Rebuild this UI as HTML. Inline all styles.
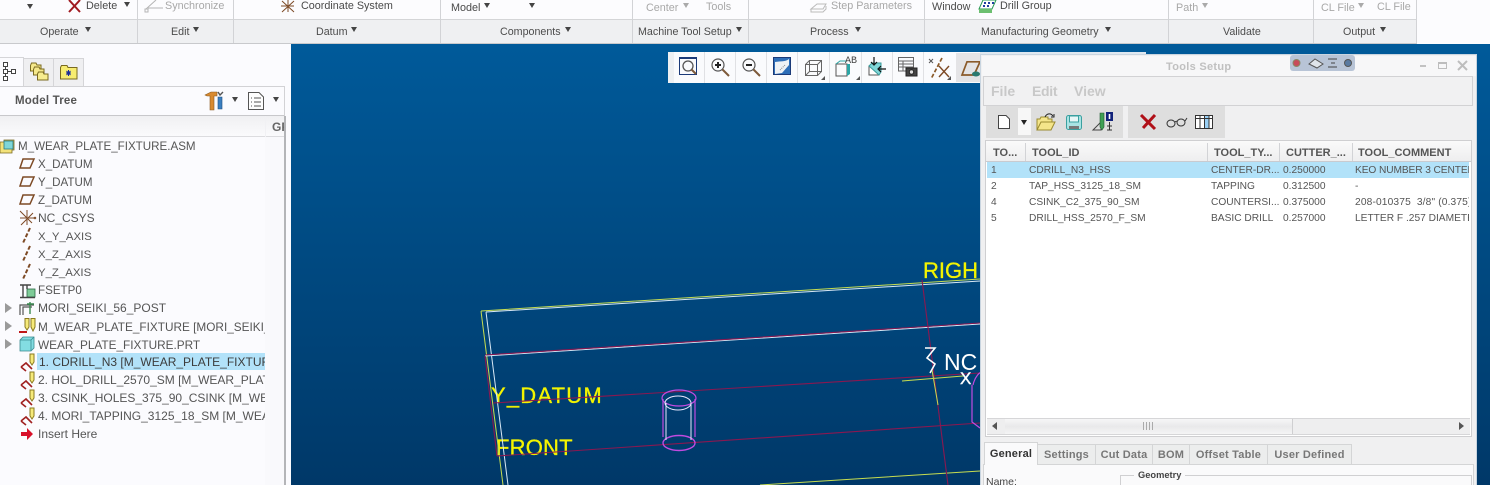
<!DOCTYPE html>
<html><head><meta charset="utf-8">
<style>
html,body{margin:0;padding:0;width:1490px;height:485px;overflow:hidden;background:#fff}
body{font-family:"Liberation Sans",sans-serif;position:relative}
.a{position:absolute}
.t{position:absolute;white-space:nowrap;font-size:10.8px;line-height:14px;color:#4a4a4a;margin-top:1px}
.g{color:#a8a8a8}
.l{position:absolute;top:25px;font-size:10.7px;line-height:14px;color:#4c4c4c;white-space:nowrap}
.s{position:absolute;width:1px;background:#d2d3d6}
.ts{position:absolute;width:1px;background:#e0e1e4}
.tri{position:absolute;width:0;height:0;border-left:3.5px solid transparent;border-right:3.5px solid transparent;border-top:5px solid #444}
.tr{position:absolute;left:38px;white-space:nowrap;font-size:12px;line-height:14px;color:#555}
.n{font-size:11.6px;margin-top:1px}
svg{position:absolute;overflow:visible}
.arr{position:absolute;left:5px;width:0;height:0;border-top:5px solid transparent;border-bottom:5px solid transparent;border-left:7px solid #9a9a9a}
.h{position:absolute;top:147px;font-size:11px;font-weight:bold;color:#555;line-height:13px;white-space:nowrap}
.c{position:absolute;font-size:10.2px;line-height:13px;color:#555;white-space:nowrap;overflow:hidden;margin-top:1px}
.tb{position:absolute;top:444px;height:20px;background:#eceded;border:1px solid #d4d5d6;border-bottom:none;box-sizing:border-box;font-size:11px;font-weight:bold;color:#777;line-height:20px;text-align:center;letter-spacing:.2px}
.v{position:absolute;color:#f4f400;white-space:nowrap;font-size:22px;line-height:25px;-webkit-text-stroke:.3px #f4f400}
</style></head><body>

<!-- ribbon -->
<div class="a" style="left:0;top:0;width:1490px;height:44px;background:#fcfcfe"></div>
<div class="a" style="left:0;top:19px;width:1417px;height:25px;background:#eff0f2;border-top:1px solid #d4d5d7;border-bottom:1px solid #c8c9cc;box-sizing:border-box"></div>
<div class="s" style="left:137px;top:0;height:43px"></div>
<div class="s" style="left:233px;top:0;height:43px"></div>
<div class="s" style="left:440px;top:0;height:43px"></div>
<div class="s" style="left:632px;top:0;height:43px"></div>
<div class="s" style="left:748px;top:0;height:43px"></div>
<div class="s" style="left:924px;top:0;height:43px"></div>
<div class="s" style="left:1168px;top:0;height:43px"></div>
<div class="s" style="left:1313px;top:0;height:43px"></div>
<div class="s" style="left:1416px;top:0;height:43px"></div>

<div class="tri" style="left:27px;top:4px"></div>
<svg style="left:68px;top:0" width="14" height="13"><path d="M1 0L12 12M12 0L1 12" stroke="#a01a20" stroke-width="2" fill="none"/></svg>
<div class="t" style="left:86px;top:-2px">Delete</div>
<div class="tri" style="left:124px;top:2px"></div>
<svg style="left:145px;top:0" width="18" height="13" fill="none" stroke="#b5b5b5"><path d="M1 9L11 0M3 8H18"/><rect x="0" y="9" width="3" height="3"/></svg>
<div class="t g" style="left:165px;top:-2px">Synchronize</div>
<svg style="left:281px;top:0" width="17" height="13" fill="none" stroke="#7d4a25"><path d="M1 1L13 12M1 12L13 1M7 0V12M0 6H13"/></svg>
<div class="t" style="left:301px;top:-2px">Coordinate System</div>
<div class="t" style="left:451px;top:0">Model</div>
<div class="tri" style="left:484px;top:3px"></div>
<div class="tri" style="left:529px;top:3px"></div>
<div class="t g" style="left:646px;top:0">Center</div>
<div class="tri" style="left:683px;top:3px;border-top-color:#aaa"></div>
<div class="t g" style="left:706px;top:-1px">Tools</div>
<svg style="left:810px;top:1px" width="18" height="12" fill="none" stroke="#bbb"><path d="M1 8L7 3H16L13 8H1ZM1 8V11H13L16 8V5"/></svg>
<div class="t g" style="left:831px;top:-2px">Step Parameters</div>
<div class="t" style="left:932px;top:-1px">Window</div>
<svg style="left:979px;top:0" width="17" height="13"><path d="M4 0H17L13 9H0Z" fill="#fff" stroke="#2a9a55"/><path d="M5 2h2v2H5zM9 2h2v2H9zM13 2h2v2h-2zM4 5h2v2H4zM8 5h2v2H8z" fill="#2040a0"/><path d="M0 9H13V13H0Z" fill="#6cbf70"/></svg>
<div class="t" style="left:1000px;top:-2px">Drill Group</div>
<div class="t g" style="left:1176px;top:0">Path</div>
<div class="tri" style="left:1202px;top:3px;border-top-color:#aaa"></div>
<div class="t g" style="left:1321px;top:0">CL File</div>
<div class="tri" style="left:1358px;top:3px;border-top-color:#aaa"></div>
<div class="t g" style="left:1377px;top:-1px">CL File</div>

<div class="l" style="left:40px">Operate</div><div class="tri" style="left:85px;top:27px"></div>
<div class="l" style="left:171px">Edit</div><div class="tri" style="left:193px;top:27px"></div>
<div class="l" style="left:316px">Datum</div><div class="tri" style="left:351px;top:27px"></div>
<div class="l" style="left:500px">Components</div><div class="tri" style="left:565px;top:27px"></div>
<div class="l" style="left:638px">Machine Tool Setup</div><div class="tri" style="left:736px;top:27px"></div>
<div class="l" style="left:810px">Process</div><div class="tri" style="left:855px;top:27px"></div>
<div class="l" style="left:981px">Manufacturing Geometry</div><div class="tri" style="left:1105px;top:27px"></div>
<div class="l" style="left:1223px">Validate</div>
<div class="l" style="left:1343px">Output</div><div class="tri" style="left:1380px;top:27px"></div>

<!-- left panel -->
<div class="a" style="left:0;top:44px;width:291px;height:441px;background:#fbfbfe"></div>
<div class="a" style="left:0;top:57px;width:24px;height:30px;background:#fbfbfe;border-right:1px solid #d5d5d8;border-top:1px solid #d5d5d8;box-sizing:border-box"></div>
<div class="a" style="left:24px;top:58px;width:30px;height:29px;background:#efeff1;border-top:1px solid #d5d5d8;border-right:1px solid #d5d5d8;box-sizing:border-box"></div>
<div class="a" style="left:54px;top:58px;width:30px;height:29px;background:#efeff1;border-top:1px solid #d5d5d8;border-right:1px solid #d5d5d8;box-sizing:border-box"></div>
<svg style="left:3px;top:62px" width="14" height="20" fill="#fff" stroke="#444"><rect x=".5" y=".5" width="4" height="4"/><rect x=".5" y="7.5" width="4" height="4"/><rect x=".5" y="14.5" width="4" height="4"/><rect x="8.5" y="7.5" width="4" height="4"/><path d="M2.5 5V7M2.5 12V14M5 9.5H8" fill="none"/></svg>
<svg style="left:30px;top:62px" width="19" height="19" stroke="#7a6a20"><path d="M.5 3.5L1.5 1H6L7 3H11V9H.5Z" fill="#f5e88a"/><path d="M3.5 7.5L4.5 5H9L10 7H14V13H3.5Z" fill="#f5e88a"/><path d="M7.5 12L8.5 10H13L14 12H18V18H7.5Z" fill="#f7ec8e"/></svg>
<svg style="left:60px;top:65px" width="18" height="15" stroke="#7a6a20"><path d="M.5 2.5L1.5 .5H7L8 2.5H17V14H.5Z" fill="#f7ec70"/><path d="M8.5 5V11M6 8H11M6.5 6L10.5 10M10.5 6L6.5 10" stroke="#1a2a9a" stroke-width="1"/></svg>

<div class="a" style="left:0;top:86px;width:285px;height:1px;background:#d2d2d5"></div>
<div class="a" style="left:284px;top:86px;width:1px;height:30px;background:#d2d2d5"></div>
<div class="a" style="left:15px;top:94px;font-size:11.5px;font-weight:bold;color:#555;line-height:14px;letter-spacing:.2px">Model Tree</div>
<svg style="left:205px;top:91px" width="19" height="20"><path d="M0 4L6 1H12V5H9V19H5V5H2Z" fill="#d98a30" stroke="#8a5a20" stroke-width=".6"/><path d="M13 6H17V18H13Z" fill="#3a7fc0" stroke="#1f4f80" stroke-width=".6"/><path d="M13 1L15 4L18 1" fill="none" stroke="#555" stroke-width="1.4"/></svg>
<div class="tri" style="left:232px;top:97px"></div>
<svg style="left:248px;top:92px" width="16" height="18" fill="none" stroke="#555"><path d="M.5.5H11L15.5 5V17.5H.5Z" fill="#fdfdfd"/><path d="M3 6h1M6 6h7M3 10h1M6 10h7M3 14h1M6 14h7"/></svg>
<div class="tri" style="left:273px;top:97px"></div>

<div class="a" style="left:0;top:115px;width:284px;height:22px;background:linear-gradient(#f0f0f2,#fafafc);border-top:1px solid #c8c8cb;border-bottom:1px solid #dcdcdf;box-sizing:border-box"></div>
<div class="a" style="left:265px;top:116px;width:1px;height:369px;background:#f1f1f4"></div>
<div class="a" style="left:265px;top:137px;width:19px;height:348px;background:#f9f9fc"></div>
<div class="a" style="left:272px;top:120px;width:12px;height:14px;overflow:hidden;font-size:12px;font-weight:bold;color:#666;line-height:14px">GF</div>
<div class="a" style="left:284px;top:116px;width:2px;height:369px;background:#b4b5b8"></div>

<svg style="left:0;top:139px" width="15" height="14"><path d="M0 3H4V1H14V11H12V14H0Z" fill="#f3e27a" stroke="#7a6a20" stroke-width=".8"/><rect x="4" y="2" width="9" height="8" fill="#7fd6d8" stroke="#2a7a80" stroke-width=".8"/></svg>
<div class="tr n" style="left:18px;top:139px">M_WEAR_PLATE_FIXTURE.ASM</div>
<svg style="left:19px;top:158px" width="16" height="11" fill="none" stroke="#7d4a25" stroke-width="1.5"><path d="M4 1H15L11 10H1Z"/></svg>
<div class="tr n" style="top:157px">X_DATUM</div>
<svg style="left:19px;top:176px" width="16" height="11" fill="none" stroke="#7d4a25" stroke-width="1.5"><path d="M4 1H15L11 10H1Z"/></svg>
<div class="tr n" style="top:175px">Y_DATUM</div>
<svg style="left:19px;top:194px" width="16" height="11" fill="none" stroke="#7d4a25" stroke-width="1.5"><path d="M4 1H15L11 10H1Z"/></svg>
<div class="tr n" style="top:193px">Z_DATUM</div>
<svg style="left:19px;top:210px" width="17" height="16" fill="none" stroke="#7d4a25"><path d="M1 1L13 13M2 15L14 3M8 0V15M1 8H15M15 7L17 9M17 7L15 9"/></svg>
<div class="tr" style="top:211px">NC_CSYS</div>
<svg style="left:21px;top:228px" width="12" height="16" fill="none" stroke="#7d4a25" stroke-width="2" stroke-dasharray="4 2"><path d="M9 0L2 15"/></svg>
<div class="tr n" style="top:229px;font-size:11.4px">X_Y_AXIS</div>
<svg style="left:21px;top:246px" width="12" height="16" fill="none" stroke="#7d4a25" stroke-width="2" stroke-dasharray="4 2"><path d="M9 0L2 15"/></svg>
<div class="tr n" style="top:247px;font-size:11.4px">X_Z_AXIS</div>
<svg style="left:21px;top:264px" width="12" height="16" fill="none" stroke="#7d4a25" stroke-width="2" stroke-dasharray="4 2"><path d="M9 0L2 15"/></svg>
<div class="tr n" style="top:265px;font-size:11.4px">Y_Z_AXIS</div>
<svg style="left:19px;top:282px" width="17" height="16"><rect x="8" y="7" width="8" height="8" fill="#7ecb98" stroke="#2a6a45" stroke-width=".8"/><path d="M1 3H12M4 3V15M8 3V7M1 15.5H16" stroke="#444" stroke-width="1.4" fill="none"/></svg>
<div class="tr n" style="top:283px">FSETP0</div>
<div class="arr" style="top:303px"></div>
<svg style="left:19px;top:301px" width="17" height="15" fill="none"><path d="M1 14V4H15M4 14V6H13" stroke="#555" stroke-width="1.2"/><path d="M11 1V13M8 3H15" stroke="#3a8a50" stroke-width="1.4"/></svg>
<div class="tr" style="top:301px">MORI_SEIKI_56_POST</div>
<div class="arr" style="top:321px"></div>
<svg style="left:19px;top:318px" width="17" height="16" fill="none" stroke="#8a7a20"><path d="M6 .5V9L8 12L10 9V.5ZM12 .5V9L14 13L16 9V.5Z" fill="#f6ea7a"/><path d="M0 14H8" stroke="#c01818" stroke-width="2"/></svg>
<div class="tr n" style="top:319px;width:227px;overflow:hidden;font-size:11.8px">M_WEAR_PLATE_FIXTURE [MORI_SEIKI_56_POST]</div>
<div class="arr" style="top:339px"></div>
<svg style="left:20px;top:337px" width="14" height="14"><path d="M3 0H14V11L11 14H0V3Z" fill="#83dde2" stroke="#3a8a90" stroke-width=".8"/><path d="M0 3H11V14M11 3L14 0" stroke="#3a8a90" stroke-width=".8" fill="none"/></svg>
<div class="tr n" style="top:337px;font-size:11.8px">WEAR_PLATE_FIXTURE.PRT</div>
<div class="a" style="left:37px;top:353px;width:228px;height:17px;background:#b2e2f9"></div>
<svg style="left:20px;top:353px" width="16" height="18" fill="none"><path d="M1 14L6 10L12 16M6 18L1 14M6 10L10 14" stroke="#a02020" stroke-width="1.6"/><path d="M10 1V9L12 12L14 9V1Z" fill="#f6ea7a" stroke="#8a7a20"/></svg>
<div class="tr" style="top:355px;left:39px;width:226px;overflow:hidden;color:#3c3c3c">1. CDRILL_N3 [M_WEAR_PLATE_FIXTURE]</div>
<svg style="left:20px;top:371px" width="16" height="18" fill="none"><path d="M1 14L6 10L12 16M6 18L1 14M6 10L10 14" stroke="#a02020" stroke-width="1.6"/><path d="M10 1V9L12 12L14 9V1Z" fill="#f6ea7a" stroke="#8a7a20"/></svg>
<div class="tr" style="top:373px;width:227px;overflow:hidden">2. HOL_DRILL_2570_SM [M_WEAR_PLATE_FIXTURE]</div>
<svg style="left:20px;top:389px" width="16" height="18" fill="none"><path d="M1 14L6 10L12 16M6 18L1 14M6 10L10 14" stroke="#a02020" stroke-width="1.6"/><path d="M10 1V9L12 12L14 9V1Z" fill="#f6ea7a" stroke="#8a7a20"/></svg>
<div class="tr" style="top:391px;width:227px;overflow:hidden">3. CSINK_HOLES_375_90_CSINK [M_WEAR_PLATE]</div>
<svg style="left:20px;top:407px" width="16" height="18" fill="none"><path d="M1 14L6 10L12 16M6 18L1 14M6 10L10 14" stroke="#a02020" stroke-width="1.6"/><path d="M10 1V9L12 12L14 9V1Z" fill="#f6ea7a" stroke="#8a7a20"/></svg>
<div class="tr" style="top:409px;width:227px;overflow:hidden">4. MORI_TAPPING_3125_18_SM [M_WEAR_PLATE]</div>
<svg style="left:21px;top:428px" width="13" height="12"><path d="M0 4H6V0L12 6L6 12V8H0Z" fill="#d8102a"/></svg>
<div class="tr" style="top:427px">Insert Here</div>

<!-- viewport -->
<div class="a" style="left:291px;top:44px;width:1199px;height:441px;background:linear-gradient(#005a9a,#004a82 47%,#003868)"></div>
<div class="v" style="left:923px;top:258px;width:55px;overflow:hidden">RIGHT</div>
<div class="v" style="left:491px;top:383px;letter-spacing:1.2px">Y_DATUM</div>
<div class="v" style="left:496px;top:435px;letter-spacing:.2px">FRONT</div>
<svg style="left:0;top:0" width="1490" height="485" fill="none">
<path d="M481 311L980 279M481 311L503 485M760 485L980 471" stroke="#c6dc50" stroke-width="1"/>
<path d="M486 312L980 281M486 312L508 485M485 356L980 324" stroke="#d8e8f5" stroke-width="1"/>
<path d="M485 355L980 323M493 403L980 373M497 456L980 423M922 280L948 485M485 356L497 456" stroke="#8a1850" stroke-width="1.1"/>
<path d="M902 381L963 376M932 370L938 405" stroke="#c6dc50"/>
<path d="M663 399V437M695 399V437" stroke="#c24be0" stroke-width="1.2"/>
<ellipse cx="679" cy="398" rx="17" ry="8" stroke="#c24be0" stroke-width="1.2"/>
<ellipse cx="679" cy="443" rx="16" ry="7.5" stroke="#c24be0" stroke-width="1.4"/>
<ellipse cx="678" cy="403" rx="13" ry="7" stroke="#e8e8ff"/>
<path d="M666 403V440M691 403V440" stroke="#e8e8ff"/>
<path d="M973 385C975 376 980 372 982 372M972 385V422L980 428" stroke="#c24be0" stroke-width="1.2"/>
<path d="M925 348H935L927 358L935 364L930 373" stroke="#fff" stroke-width="1.6"/>
</svg>
<div class="a" style="left:944px;top:350px;font-size:23px;line-height:25px;color:#fff;width:36px;overflow:hidden">NC</div>
<div class="a" style="left:960px;top:369px;font-size:17px;line-height:19px;color:#fff;-webkit-text-stroke:.4px #fff">X</div>

<!-- floating toolbar -->
<div class="a" style="left:668px;top:52px;width:313px;height:31px;background:#fafbfd;border-left:6px solid #eef0f2;box-sizing:border-box"></div>
<div class="a" style="left:980px;top:52px;width:166px;height:2px;background:#dfe8f0"></div>
<div class="ts" style="left:704px;top:52px;height:31px"></div>
<div class="ts" style="left:735px;top:52px;height:31px"></div>
<div class="ts" style="left:766px;top:52px;height:31px"></div>
<div class="ts" style="left:797px;top:52px;height:31px"></div>
<div class="ts" style="left:829px;top:52px;height:31px"></div>
<div class="ts" style="left:861px;top:52px;height:31px"></div>
<div class="ts" style="left:892px;top:52px;height:31px"></div>
<div class="ts" style="left:923px;top:52px;height:31px"></div>
<div class="a" style="left:956px;top:53px;width:25px;height:29px;background:#e4e4e6"></div>
<svg style="left:679px;top:57px" width="18" height="19" fill="none"><rect x=".5" y=".5" width="17" height="17" stroke="#1b3a78"/><path d="M0 1H18" stroke="#1b3a78" stroke-width="2"/><circle cx="9" cy="9" r="5" stroke="#555" stroke-width="1.3"/><path d="M12.5 12.5L17 17" stroke="#7d5a3a" stroke-width="2"/></svg>
<svg style="left:711px;top:58px" width="19" height="19" fill="none"><circle cx="7" cy="7" r="6" stroke="#555" stroke-width="1.2"/><path d="M4 7H10M7 4V10" stroke="#222" stroke-width="2"/><path d="M11.5 11.5L18 18" stroke="#7d5a3a" stroke-width="2"/></svg>
<svg style="left:742px;top:58px" width="19" height="19" fill="none"><circle cx="7" cy="7" r="6" stroke="#555" stroke-width="1.2"/><path d="M4 7H10" stroke="#222" stroke-width="2"/><path d="M11.5 11.5L18 18" stroke="#7d5a3a" stroke-width="2"/></svg>
<svg style="left:773px;top:57px" width="18" height="18"><rect x=".5" y=".5" width="17" height="17" fill="#2e6fb8" stroke="#1b3a78"/><path d="M2 17V5C8 4 12 5 16 2V8L9 16Z" fill="#eef2f5"/><path d="M7 13L12 8" stroke="#888" stroke-dasharray="1 1"/></svg>
<svg style="left:805px;top:60px" width="20" height="20" fill="none" stroke="#666"><rect x=".5" y="4.5" width="12" height="11"/><rect x="4.5" y=".5" width="12" height="11"/><path d="M.5 4.5L4.5.5M12.5 4.5L16.5.5M12.5 15.5L16.5 11.5M.5 15.5L4.5 11.5"/><path d="M20 16V20H16Z" fill="#555" stroke="none"/></svg>
<svg style="left:835px;top:57px" width="26" height="23" fill="none"><path d="M1 7H12V19H1Z" stroke="#555"/><path d="M1 7L5 4H12" stroke="#2aa5a5"/><path d="M12 7H15V17L12 19Z" fill="#2aa5a5"/><path d="M25 19V23H21Z" fill="#555"/></svg>
<div class="a" style="left:845px;top:57px;font-family:'Liberation Mono',monospace;font-size:10px;line-height:10px;color:#444">AB</div>
<svg style="left:868px;top:57px" width="18" height="19" fill="none"><path d="M1 9H11V18H1Z" fill="#fff" stroke="#555"/><path d="M1 9L4 6H13V15L11 18Z" fill="#7fd6d8" stroke="#3a9a9a"/><path d="M6 0V8M3 5L6 8L9 5M18 12H10M13 9L10 12L13 15" stroke="#111" stroke-width="1.2"/></svg>
<svg style="left:898px;top:57px" width="20" height="20" fill="none" stroke="#666"><path d="M.5.5H15.5V14H.5ZM.5 4H15M.5 7H15M.5 10H15M5 4V14"/><rect x="8" y="11" width="11" height="8" fill="#444" stroke="#222"/><circle cx="13.5" cy="15" r="2.2" fill="#ddd" stroke="#222"/></svg>
<svg style="left:928px;top:57px" width="24" height="23" fill="none"><path d="M1 2L5 6M5 2L1 6" stroke="#555"/><path d="M14 1L3 22" stroke="#8a5a2a" stroke-width="1.7" stroke-dasharray="4 2"/><path d="M11 9L21 20M21 9L11 20" stroke="#7d4a25" stroke-width="1.4"/><path d="M23 19V23H19Z" fill="#555"/></svg>
<svg style="left:961px;top:61px" width="19" height="15" fill="none"><path d="M6 .8H19L13 14H1Z" stroke="#8a5a2a" stroke-width="1.7"/><ellipse cx="15" cy="13" rx="4" ry="2.5" fill="#2a7a70"/></svg>

<!-- dialog -->
<div class="a" style="left:980px;top:54px;width:497px;height:431px;background:#f0f0f1;border:1px solid #c9d5e0;border-bottom:none;box-sizing:border-box"></div>
<div class="a" style="left:982px;top:56px;width:494px;height:20px;background:#f7f7f8"></div>
<div class="a" style="left:1166px;top:60px;font-size:11px;font-weight:bold;color:#c0c0c0;line-height:14px;letter-spacing:.3px">Tools Setup</div>
<div class="a" style="left:1290px;top:55px;width:65px;height:16px;background:#b8c4d6;border-radius:3px"></div>
<svg style="left:1290px;top:55px" width="65" height="16" fill="none" stroke="#555"><circle cx="6.500" cy="8" r="3.500" fill="#c84a5a" stroke="#886"/><path d="M19 9L25 4L33 9L27 13Z" fill="#dfe4ea"/><path d="M38 4H47M41 8H45M38 12H47" stroke="#444"/><circle cx="58" cy="8" r="3.500" fill="#5a7aa0"/></svg>
<div class="a" style="left:1420px;top:65px;width:6px;height:2px;background:#c2c2c2"></div>
<div class="a" style="left:1438px;top:62px;width:9px;height:7px;border:1px solid #bdbdbd;border-top-width:2px;box-sizing:border-box"></div>
<svg style="left:1458px;top:61px" width="9" height="9" stroke="#bdbdbd" stroke-width="2"><path d="M0 0L9 9M9 0L0 9"/></svg>

<div class="a" style="left:983px;top:76px;width:490px;height:30px;background:#f1f1f2;border:1px solid #d2d2d4;box-sizing:border-box"></div>
<div class="a" style="left:991px;top:83px;font-size:14px;font-weight:bold;color:#c8c8c8;line-height:16px">File</div>
<div class="a" style="left:1032px;top:83px;font-size:14px;font-weight:bold;color:#c8c8c8;line-height:16px;letter-spacing:-.3px">Edit</div>
<div class="a" style="left:1074px;top:83px;font-size:14px;font-weight:bold;color:#c8c8c8;line-height:16px">View</div>

<div class="a" style="left:986px;top:106px;width:137px;height:32px;background:#dedede"></div>
<div class="a" style="left:1128px;top:106px;width:97px;height:32px;background:#dedede"></div>
<div class="a" style="left:1018px;top:108px;width:13px;height:27px;background:#f7f7f7"></div>
<div class="tri" style="left:1021px;top:120px;border-top-color:#222"></div>
<svg style="left:998px;top:115px" width="12" height="14"><path d="M.5.5H8L11.500 4V13.500H.5Z" fill="#fff" stroke="#444"/></svg>
<svg style="left:1036px;top:113px" width="20" height="18"><path d="M1 17V6H4L5 4H12V6H16V9" fill="#f4e58a" stroke="#9a8a30"/><path d="M1 17L5 9H19L15 17Z" fill="#f4e58a" stroke="#9a8a30"/><path d="M9 4C11 0 15 0 17 3M15 4H18V1" fill="none" stroke="#222"/></svg>
<svg style="left:1066px;top:115px" width="16" height="15"><rect x=".5" y=".5" width="15" height="14" rx="2" fill="#a9e3e3" stroke="#3aa0a0"/><rect x="3.500" y="1" width="9" height="6" fill="#e7f7f7" stroke="#3aa0a0"/><rect x="3" y="11" width="10" height="3" fill="#777"/></svg>
<svg style="left:1092px;top:112px" width="21" height="19" fill="none"><path d="M1 18L9 10V18Z" stroke="#444"/><path d="M8 1H12V15L10 18L8 15Z" fill="#3fa055" stroke="#205a30" stroke-width=".6"/><rect x="14" y="0" width="7" height="9" fill="#11227a"/><path d="M17.500 2V7" stroke="#fff" stroke-width="1.6"/><path d="M17.500 10V18M15 14H20M15 18H20" stroke="#333"/></svg>
<svg style="left:1140px;top:114px" width="17" height="16"><path d="M1 1L15 15M15 1L3 14" stroke="#b01018" stroke-width="3"/></svg>
<svg style="left:1166px;top:116px" width="21" height="12" fill="none" stroke="#333"><ellipse cx="5" cy="7.500" rx="4" ry="3.500"/><ellipse cx="15" cy="6.500" rx="4" ry="3.500"/><path d="M9 6C10 5 10.500 5 11 5.500M19 5L21 2"/></svg>
<svg style="left:1195px;top:115px" width="18" height="14" stroke="#333"><rect x=".5" y=".5" width="17" height="13" fill="#fff"/><rect x="10" y="1" width="4" height="12" fill="#9ad0f5" stroke="none"/><path d="M.5 3.500H17.500M5 .5V13.500M9.500 .5V13.500M14 .5V13.500" fill="none"/></svg>

<!-- table -->
<div class="a" style="left:985px;top:140px;width:487px;height:297px;background:#fff;border:1px solid #cfcfd1;box-sizing:border-box"></div>
<div class="a" style="left:986px;top:141px;width:485px;height:21px;background:linear-gradient(#fafafa,#eeeeef);border-bottom:1px solid #c9cbd0;box-sizing:border-box"></div>
<div class="s" style="left:1025px;top:143px;height:18px"></div>
<div class="s" style="left:1207px;top:143px;height:18px"></div>
<div class="s" style="left:1279px;top:143px;height:18px"></div>
<div class="s" style="left:1352px;top:143px;height:18px"></div>
<div class="h" style="left:993px">TO...</div>
<div class="h" style="left:1032px">TOOL_ID</div>
<div class="h" style="left:1214px">TOOL_TY...</div>
<div class="h" style="left:1286px">CUTTER_...</div>
<div class="h" style="left:1358px">TOOL_COMMENT</div>
<div class="a" style="left:987px;top:162px;width:482px;height:16px;background:#b2e2f9"></div>

<div class="c" style="left:991px;top:163px">1</div>
<div class="c" style="left:1029px;top:163px">CDRILL_N3_HSS</div>
<div class="c" style="left:1211px;top:163px">CENTER-DR...</div>
<div class="c" style="left:1283px;top:163px">0.250000</div>
<div class="c" style="left:1355px;top:163px;width:114px;letter-spacing:-.1px">KEO NUMBER 3 CENTER DRILL</div>

<div class="c" style="left:991px;top:179px">2</div>
<div class="c" style="left:1029px;top:179px">TAP_HSS_3125_18_SM</div>
<div class="c" style="left:1211px;top:179px">TAPPING</div>
<div class="c" style="left:1283px;top:179px">0.312500</div>
<div class="c" style="left:1355px;top:179px">-</div>

<div class="c" style="left:991px;top:195px">4</div>
<div class="c" style="left:1029px;top:195px">CSINK_C2_375_90_SM</div>
<div class="c" style="left:1211px;top:195px">COUNTERSI...</div>
<div class="c" style="left:1283px;top:195px">0.375000</div>
<div class="c" style="left:1355px;top:195px;width:114px;letter-spacing:.15px">208-010375&nbsp; 3/8" (0.375) DIA</div>

<div class="c" style="left:991px;top:211px">5</div>
<div class="c" style="left:1029px;top:211px">DRILL_HSS_2570_F_SM</div>
<div class="c" style="left:1211px;top:211px">BASIC DRILL</div>
<div class="c" style="left:1283px;top:211px">0.257000</div>
<div class="c" style="left:1355px;top:211px;width:114px">LETTER F .257 DIAMETER</div>

<!-- scrollbar -->
<div class="a" style="left:987px;top:418px;width:483px;height:17px;background:#eeeeef;border-top:1px solid #d6d6d8;border-bottom:1px solid #d6d6d8;box-sizing:border-box"></div>
<div class="a" style="left:1005px;top:419px;width:288px;height:15px;background:linear-gradient(#f6f6f7,#e9e9ea,#f4f4f5);border-right:1px solid #cfcfd1;box-sizing:border-box"></div>
<div class="a" style="left:1143px;top:422px;width:11px;height:8px;background:repeating-linear-gradient(90deg,#aaa 0 1px,transparent 1px 3px)"></div>
<div class="a" style="left:992px;top:422px;width:0;height:0;border-top:4px solid transparent;border-bottom:4px solid transparent;border-right:5px solid #555"></div>
<div class="a" style="left:1459px;top:422px;width:0;height:0;border-top:4px solid transparent;border-bottom:4px solid transparent;border-left:5px solid #555"></div>

<!-- tabs -->
<div class="a" style="left:983px;top:464px;width:491px;height:21px;background:#fafafb;border:1px solid #d4d5d6;border-bottom:none;box-sizing:border-box"></div>
<div class="tb" style="left:984px;top:442px;width:54px;height:23px;background:#fafafb;border-bottom:none;color:#333;line-height:22px;z-index:2">General</div>
<div class="tb" style="left:1037px;width:59px">Settings</div>
<div class="tb" style="left:1095px;width:58px">Cut Data</div>
<div class="tb" style="left:1152px;width:38px">BOM</div>
<div class="tb" style="left:1189px;width:79px">Offset Table</div>
<div class="tb" style="left:1267px;width:85px">User Defined</div>
<div class="a" style="left:1120px;top:475px;width:352px;height:10px;border:1px solid #d0d0d2;border-bottom:none;box-sizing:border-box"></div>
<div class="a" style="left:1134px;top:469px;background:#fafafb;padding:0 4px;font-size:9.3px;font-weight:bold;color:#444;line-height:13px">Geometry</div>
<div class="a" style="left:986px;top:476px;font-size:10.5px;color:#444;line-height:13px">Name:</div>

</body></html>
